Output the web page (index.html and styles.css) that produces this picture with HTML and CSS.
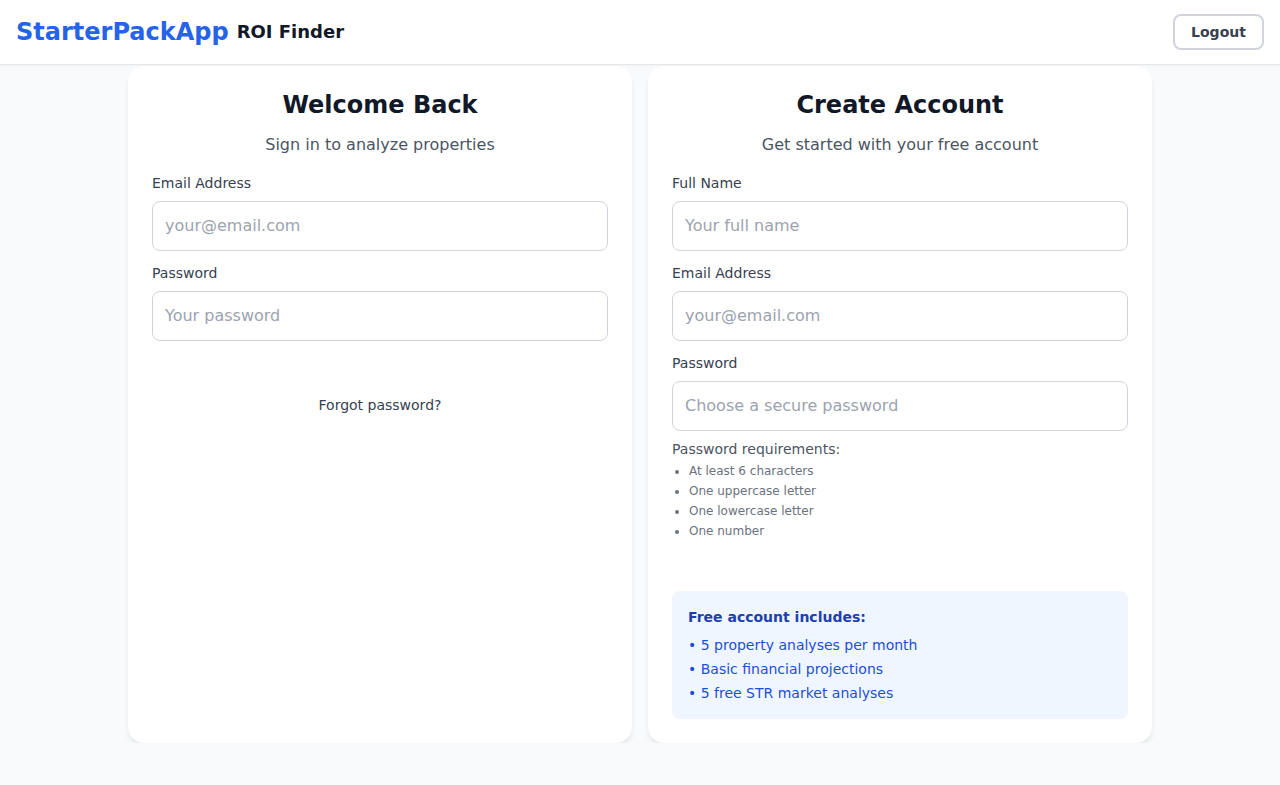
FILE: index.html
```html
<!DOCTYPE html>
<html lang="en">
<head>
<meta charset="utf-8">
<title>StarterPackApp ROI Finder</title>
<link rel="stylesheet" href="styles.css">
</head>
<body>
<header class="topbar">
  <div class="brand">
    <span class="brand-name">StarterPackApp</span>
    <span class="brand-sub">ROI Finder</span>
  </div>
  <button class="logout" type="button">Logout</button>
</header>
<main class="auth">
  <section class="card">
    <h1 class="card-title">Welcome Back</h1>
    <p class="card-sub">Sign in to analyze properties</p>
    <div class="field">
      <label class="label">Email Address</label>
      <input class="input" type="email" placeholder="your@email.com">
    </div>
    <div class="field">
      <label class="label">Password</label>
      <input class="input" type="password" placeholder="Your password">
    </div>
    <p class="forgot">Forgot password?</p>
  </section>
  <section class="card">
    <h1 class="card-title">Create Account</h1>
    <p class="card-sub">Get started with your free account</p>
    <div class="field">
      <label class="label">Full Name</label>
      <input class="input" type="text" placeholder="Your full name">
    </div>
    <div class="field">
      <label class="label">Email Address</label>
      <input class="input" type="email" placeholder="your@email.com">
    </div>
    <div class="field">
      <label class="label">Password</label>
      <input class="input" type="password" placeholder="Choose a secure password">
    </div>
    <div class="reqs">
      <p class="reqs-title">Password requirements:</p>
      <ul class="reqs-list">
        <li>At least 6 characters</li>
        <li>One uppercase letter</li>
        <li>One lowercase letter</li>
        <li>One number</li>
      </ul>
    </div>
    <div class="perks">
      <p class="perks-title">Free account includes:</p>
      <ul class="perks-list">
        <li>• 5 property analyses per month</li>
        <li>• Basic financial projections</li>
        <li>• 5 free STR market analyses</li>
      </ul>
    </div>
  </section>
</main>
</body>
</html>
```

FILE: styles.css
```css
* { box-sizing: border-box; }
html, body { margin: 0; padding: 0; }
body {
  font-family: "DejaVu Sans", sans-serif;
  background: #f9fafb;
  color: #111827;
}
.topbar {
  height: 65px;
  background: #ffffff;
  border-bottom: 1px solid #e5e7eb;
  box-shadow: 0 1px 2px rgba(0,0,0,0.04);
  display: flex;
  align-items: center;
  justify-content: space-between;
  padding: 0 16px;
}
.brand { display: flex; align-items: center; gap: 8px; }
.brand-name { font-size: 24px; line-height: 32px; font-weight: 700; color: #2563eb; }
.brand-sub { font-size: 18px; line-height: 28px; font-weight: 700; color: #111827; }
.logout {
  font-family: inherit;
  font-size: 14px;
  font-weight: 700;
  line-height: 20px;
  color: #374151;
  background: #fff;
  border: 2px solid #d1d5db;
  border-radius: 8px;
  padding: 0 16px;
  width: 91px;
  height: 36px;
}
.auth {
  width: 1024px;
  margin: 1px auto 0;
  display: grid;
  grid-template-columns: 1fr 1fr;
  gap: 16px;
}
.card {
  background: #fff;
  border-radius: 16px;
  box-shadow: 0 4px 6px -1px rgba(0,0,0,0.08), 0 2px 4px -2px rgba(0,0,0,0.06);
  padding: 23px 24px 24px;
}
.card-title {
  margin: 0 0 12px;
  text-align: center;
  font-size: 24px;
  line-height: 32px;
  font-weight: 700;
  color: #111827;
}
.card-sub {
  margin: 0 0 16px;
  text-align: center;
  font-size: 16px;
  line-height: 24px;
  color: #4b5563;
}
.field { margin-bottom: 12px; }
.label {
  display: block;
  font-size: 14px;
  line-height: 20px;
  color: #374151;
  margin-bottom: 8px;
}
.input {
  display: block;
  width: 100%;
  font-family: inherit;
  font-size: 16px;
  line-height: 24px;
  padding: 12px;
  border: 1px solid #d1d5db;
  border-radius: 8px;
  color: #111827;
  background: #fff;
}
.input::placeholder { color: #9ca3af; }
.forgot {
  margin: 54px 0 0;
  text-align: center;
  font-size: 14px;
  line-height: 20px;
  color: #374151;
}
.reqs { margin-top: -4px; }
.reqs-title {
  margin: 0 0 2px;
  font-size: 14px;
  line-height: 20px;
  color: #4b5563;
}
.reqs-list {
  margin: 0;
  padding-left: 17px;
  font-size: 12px;
  line-height: 20px;
  color: #6b7280;
  list-style: disc;
}
.perks {
  margin-top: 50px;
  background: #eff6ff;
  border-radius: 8px;
  padding: 16px;
}
.perks-title {
  margin: 0 0 8px;
  font-size: 14px;
  line-height: 20px;
  font-weight: 700;
  color: #1e40af;
}
.perks-list {
  margin: 0;
  padding: 0;
  list-style: none;
  font-size: 14px;
  line-height: 20px;
  color: #1d4ed8;
}
.perks-list li + li { margin-top: 4px; }
```
